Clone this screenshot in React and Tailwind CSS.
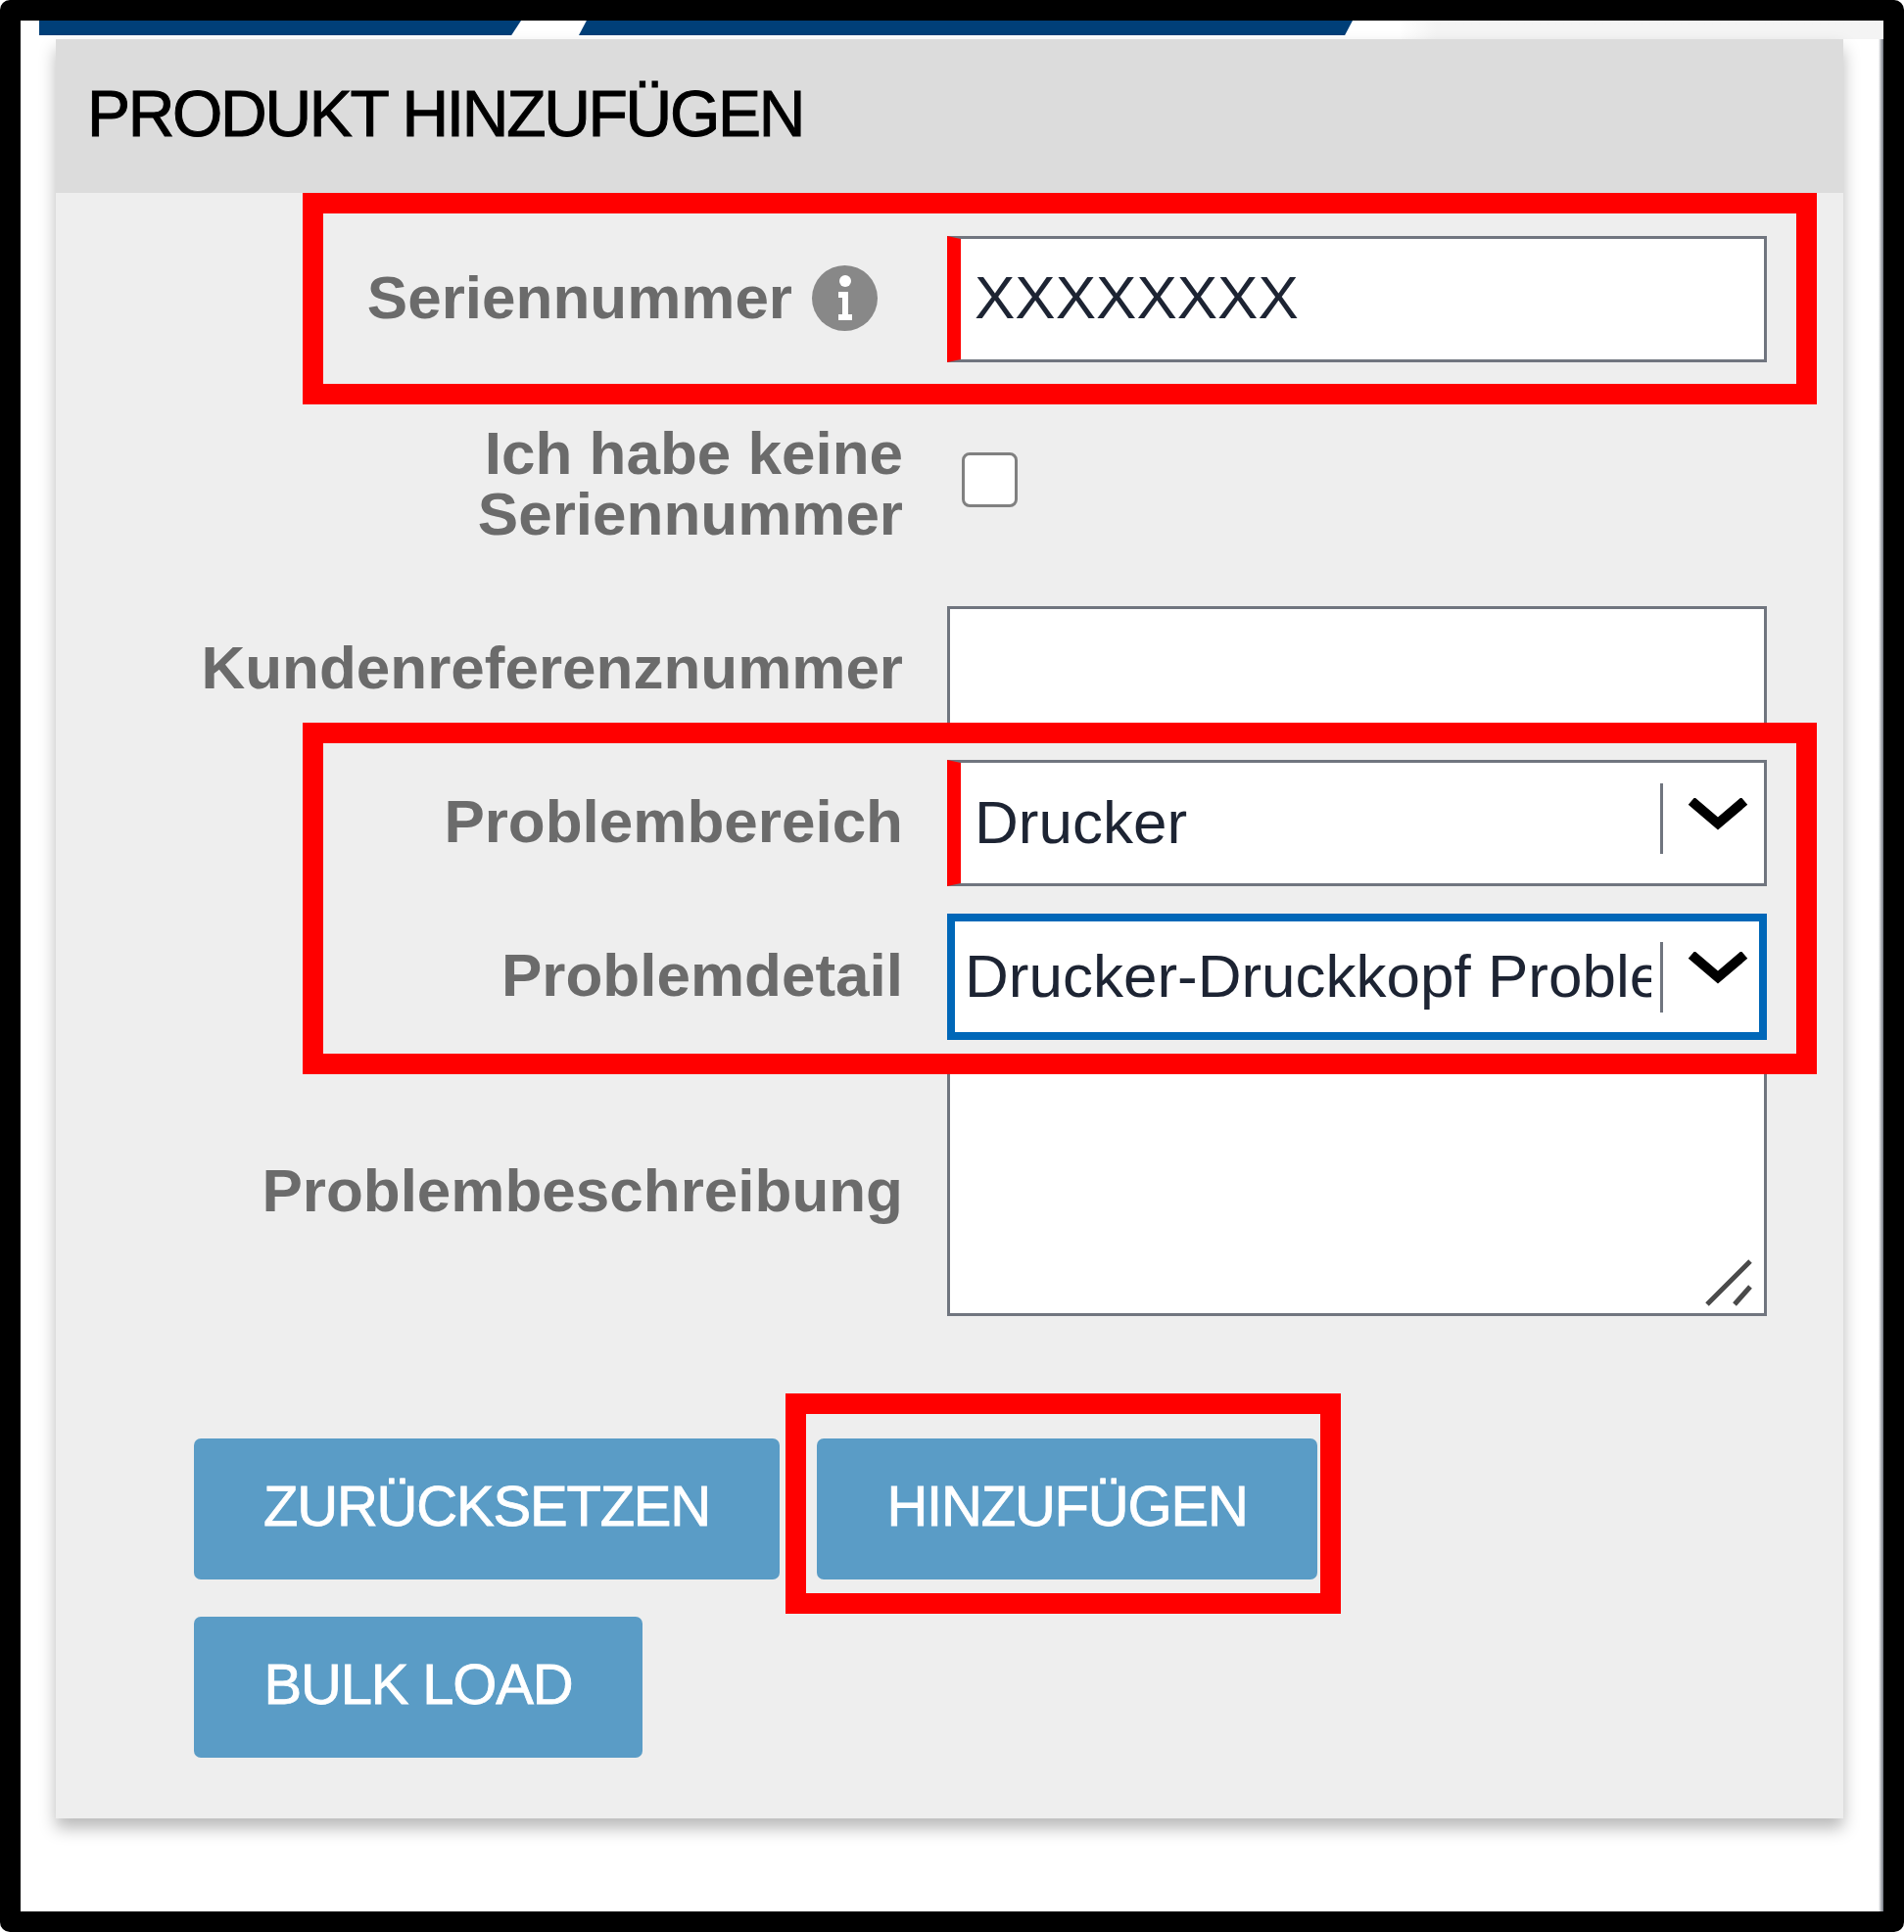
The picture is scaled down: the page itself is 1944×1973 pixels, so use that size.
const font = "font-['Liberation_Sans',Arial,sans-serif]";

function Chevron({ className }) {
  return (
    <svg width="64" height="36" viewBox="0 0 64 36" className={`absolute ${className}`}>
      <path d="M5 3 L32 26 L59 3" fill="none" stroke="#000" strokeWidth="10" />
    </svg>
  );
}

function Row({ label, children, className = "" }) {
  return (
    <div className={`flex items-center gap-[45px] ${className}`}>
      <div className="w-[865px] shrink-0 pb-[3px] text-right text-[62px] leading-[62px] font-bold text-[#6b6b6b]">{label}</div>
      {children}
    </div>
  );
}

function TextBox({ required, children }) {
  return (
    <div
      className={`relative h-[129px] w-[837px] overflow-hidden border-[3px] border-[#70757f] bg-white whitespace-nowrap text-[62px] leading-[119px] text-[#1d2433] ${
        required ? "border-l-[14px] border-l-[#ff0000] pl-[14px]" : "pl-[14px]"
      }`}
    >
      {children}
    </div>
  );
}

function SelectBox({ focused, children }) {
  return (
    <div
      className={`relative h-[129px] w-[837px] bg-white whitespace-nowrap text-[62px] text-[#1d2433] ${
        focused ? "border-[8px] border-[#0067b8]" : "border-[3px] border-l-[14px] border-[#70757f] border-l-[#ff0000]"
      }`}
    >
      <div className={`overflow-hidden ${focused ? "w-[711px] pl-[10px] leading-[112px]" : "w-[699px] pl-[14px] leading-[121px]"}`}>{children}</div>
      <span className={`absolute top-[21px] h-[72px] w-[3px] bg-[#70757f] ${focused ? "left-[720px]" : "left-[714px]"}`} />
      <Chevron className={focused ? "left-[747px] top-[31px]" : "left-[741px] top-[36px]"} />
    </div>
  );
}

function ActionButton({ children, className }) {
  return (
    <button className={`h-[144px] rounded-[7px] bg-[#5a9cc6] pb-[7px] text-[58px] tracking-[-1.2px] text-white [-webkit-text-stroke:0.8px_white] ${className}`}>
      {children}
    </button>
  );
}

export default function App() {
  return (
    <div className={`relative h-[1973px] w-[1944px] overflow-hidden rounded-[10px] border-[21px] border-black bg-white ${font}`}>
      <div className="relative h-[19px] bg-gradient-to-r from-white from-[74%] to-[#f4f4f4] to-[76%]">
        <div className="absolute left-[19px] top-0 h-[15px] w-[492px] bg-[#003f78] [clip-path:polygon(0_0,100%_0,98%_100%,0_100%)]" />
        <div className="absolute left-[570px] top-0 h-[15px] w-[790px] bg-[#003f78] [clip-path:polygon(1%_0,100%_0,99%_100%,0_100%)]" />
      </div>
      <div className="absolute right-0 top-[19px] bottom-0 w-[5px] bg-gradient-to-r from-white to-[#70757f]" />

      <div className="relative ml-[36px] w-[1825px] bg-[#eeeeee] shadow-[0_10px_16px_rgba(0,0,0,0.28)]">
        <div className="flex h-[157px] items-center bg-[#dcdcdc] pl-[32px] pb-[5px] text-[66px] tracking-[-2.3px] text-black [-webkit-text-stroke:1px_black]">
          PRODUKT HINZUFÜGEN
        </div>

        <div className="pb-[62px] pt-[44px]">
          <Row label={
            <span className="mr-[26px] inline-flex items-center justify-end gap-[20px]">
              Seriennummer
              <span className="relative flex h-[67px] w-[67px] items-center justify-center rounded-full bg-[#888888]">
                <svg width="18" height="46" viewBox="0 0 18 46">
                  <circle cx="9" cy="6" r="6" fill="#fff" />
                  <path d="M2 17 H12 V40 H16 V46 H2 V40 H6 V23 H2 Z" fill="#fff" />
                </svg>
              </span>
            </span>
          }>
            <TextBox required>XXXXXXXX</TextBox>
          </Row>

          <Row className="mt-[50px]" label={<span className="block pt-[12px]">Ich habe keine<br />Seriennummer</span>}>
            <div className="ml-[15px] h-[56px] w-[57px] rounded-[8px] border-[3px] border-[#808080] bg-white" />
          </Row>

          <Row className="mt-[60px]" label="Kundenreferenznummer">
            <TextBox />
          </Row>

          <Row className="mt-[28px]" label="Problembereich">
            <SelectBox>Drucker</SelectBox>
          </Row>

          <Row className="mt-[28px]" label="Problemdetail">
            <SelectBox focused>Drucker-Druckkopf Problem</SelectBox>
          </Row>

          <Row className="mt-[28px]" label="Problembeschreibung">
            <div className="relative h-[254px] w-[837px] border-[3px] border-[#70757f] bg-white">
              <svg width="48" height="48" viewBox="0 0 48 48" className="absolute right-[12px] bottom-[7px]">
                <path d="M2 46 L46 2 M30 46 L46 28" stroke="#4a4a4a" strokeWidth="5" fill="none" />
              </svg>
            </div>
          </Row>

          <div className="mt-[125px] ml-[141px] flex w-[1300px] flex-wrap gap-x-[38px] gap-y-[38px]">
            <ActionButton className="w-[598px]">ZURÜCKSETZEN</ActionButton>
            <ActionButton className="w-[511px]">HINZUFÜGEN</ActionButton>
            <ActionButton className="w-[458px]">BULK LOAD</ActionButton>
          </div>
        </div>

        {/* red highlight frames */}
        <div className="pointer-events-none absolute left-[252px] top-[157px] h-[216px] w-[1546px] border-[21px] border-[#ff0000]" />
        <div className="pointer-events-none absolute left-[252px] top-[698px] h-[359px] w-[1546px] border-[21px] border-[#ff0000]" />
        <div className="pointer-events-none absolute left-[745px] top-[1383px] h-[225px] w-[567px] border-[21px] border-[#ff0000]" />
      </div>
    </div>
  );
}
